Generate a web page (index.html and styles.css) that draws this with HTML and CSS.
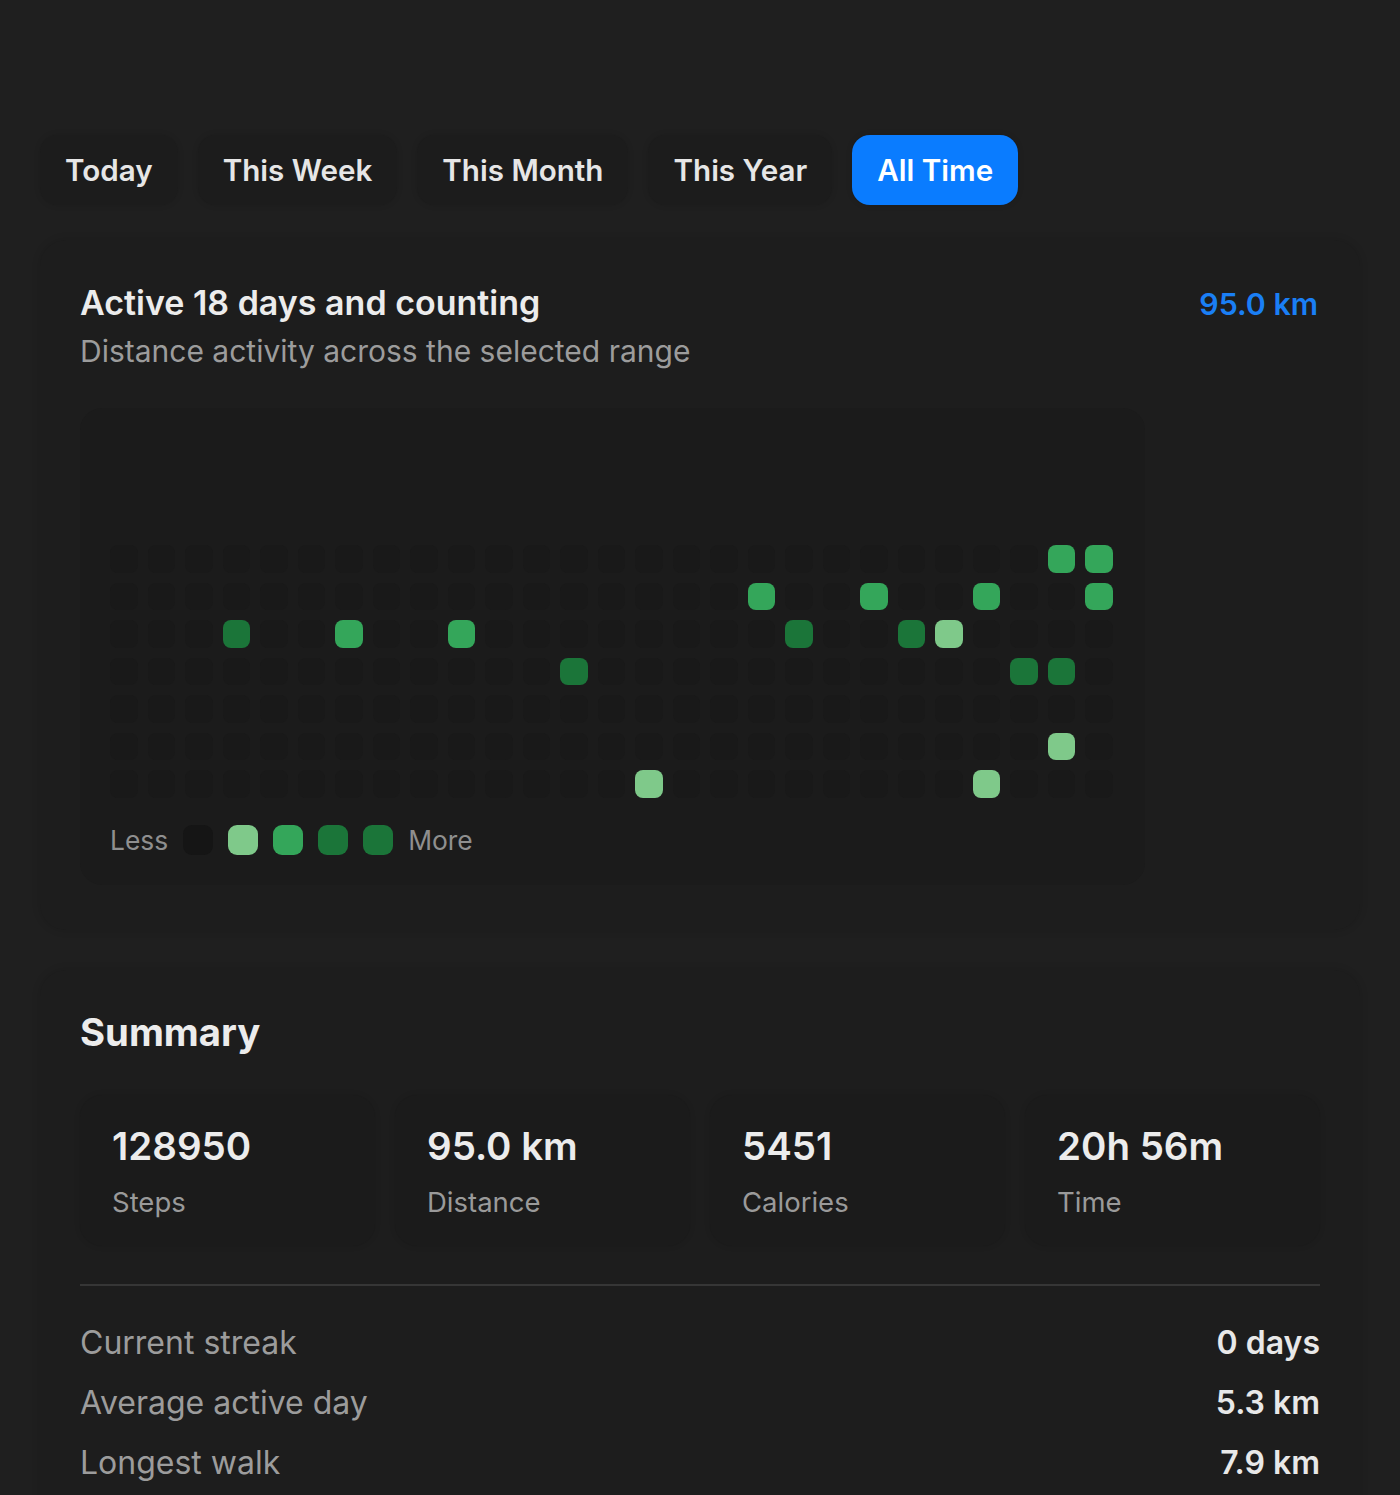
FILE: index.html
```html
<!DOCTYPE html>
<html lang="en">
<head>
<meta charset="utf-8">
<title>Activity</title>
<link rel="stylesheet" href="styles.css">
</head>
<body>
<div class="page">
  <nav class="tabs">
    <button class="tab">Today</button>
    <button class="tab">This Week</button>
    <button class="tab">This Month</button>
    <button class="tab">This Year</button>
    <button class="tab active">All Time</button>
  </nav>

  <section class="card activity">
    <div class="head">
      <div>
        <h2 class="title">Active 18 days and counting</h2>
        <p class="subtitle">Distance activity across the selected range</p>
      </div>
      <div class="total">95.0 km</div>
    </div>

    <div class="chart">
      <div class="grid">
        <div class="c"></div><div class="c"></div><div class="c"></div><div class="c"></div><div class="c"></div><div class="c"></div><div class="c"></div>
        <div class="c"></div><div class="c"></div><div class="c"></div><div class="c"></div><div class="c"></div><div class="c"></div><div class="c"></div>
        <div class="c"></div><div class="c"></div><div class="c"></div><div class="c"></div><div class="c"></div><div class="c"></div><div class="c"></div>
        <div class="c"></div><div class="c"></div><div class="c l3"></div><div class="c"></div><div class="c"></div><div class="c"></div><div class="c"></div>
        <div class="c"></div><div class="c"></div><div class="c"></div><div class="c"></div><div class="c"></div><div class="c"></div><div class="c"></div>
        <div class="c"></div><div class="c"></div><div class="c"></div><div class="c"></div><div class="c"></div><div class="c"></div><div class="c"></div>
        <div class="c"></div><div class="c"></div><div class="c l2"></div><div class="c"></div><div class="c"></div><div class="c"></div><div class="c"></div>
        <div class="c"></div><div class="c"></div><div class="c"></div><div class="c"></div><div class="c"></div><div class="c"></div><div class="c"></div>
        <div class="c"></div><div class="c"></div><div class="c"></div><div class="c"></div><div class="c"></div><div class="c"></div><div class="c"></div>
        <div class="c"></div><div class="c"></div><div class="c l2"></div><div class="c"></div><div class="c"></div><div class="c"></div><div class="c"></div>
        <div class="c"></div><div class="c"></div><div class="c"></div><div class="c"></div><div class="c"></div><div class="c"></div><div class="c"></div>
        <div class="c"></div><div class="c"></div><div class="c"></div><div class="c"></div><div class="c"></div><div class="c"></div><div class="c"></div>
        <div class="c"></div><div class="c"></div><div class="c"></div><div class="c l3"></div><div class="c"></div><div class="c"></div><div class="c"></div>
        <div class="c"></div><div class="c"></div><div class="c"></div><div class="c"></div><div class="c"></div><div class="c"></div><div class="c"></div>
        <div class="c"></div><div class="c"></div><div class="c"></div><div class="c"></div><div class="c"></div><div class="c"></div><div class="c l1"></div>
        <div class="c"></div><div class="c"></div><div class="c"></div><div class="c"></div><div class="c"></div><div class="c"></div><div class="c"></div>
        <div class="c"></div><div class="c"></div><div class="c"></div><div class="c"></div><div class="c"></div><div class="c"></div><div class="c"></div>
        <div class="c"></div><div class="c l2"></div><div class="c"></div><div class="c"></div><div class="c"></div><div class="c"></div><div class="c"></div>
        <div class="c"></div><div class="c"></div><div class="c l3"></div><div class="c"></div><div class="c"></div><div class="c"></div><div class="c"></div>
        <div class="c"></div><div class="c"></div><div class="c"></div><div class="c"></div><div class="c"></div><div class="c"></div><div class="c"></div>
        <div class="c"></div><div class="c l2"></div><div class="c"></div><div class="c"></div><div class="c"></div><div class="c"></div><div class="c"></div>
        <div class="c"></div><div class="c"></div><div class="c l3"></div><div class="c"></div><div class="c"></div><div class="c"></div><div class="c"></div>
        <div class="c"></div><div class="c"></div><div class="c l1"></div><div class="c"></div><div class="c"></div><div class="c"></div><div class="c"></div>
        <div class="c"></div><div class="c l2"></div><div class="c"></div><div class="c"></div><div class="c"></div><div class="c"></div><div class="c l1"></div>
        <div class="c"></div><div class="c"></div><div class="c"></div><div class="c l3"></div><div class="c"></div><div class="c"></div><div class="c"></div>
        <div class="c l2"></div><div class="c"></div><div class="c"></div><div class="c l3"></div><div class="c"></div><div class="c l1"></div><div class="c"></div>
        <div class="c l2"></div><div class="c l2"></div><div class="c"></div><div class="c"></div><div class="c"></div><div class="c"></div><div class="c"></div>
      </div>
      <div class="legend">
        <span class="legend-label">Less</span>
        <span class="sw l0"></span>
        <span class="sw l1"></span>
        <span class="sw l2"></span>
        <span class="sw l3"></span>
        <span class="sw l3"></span>
        <span class="legend-label">More</span>
      </div>
    </div>
  </section>

  <section class="card summary">
    <h2 class="summary-title">Summary</h2>
    <div class="stats">
      <div class="stat"><div class="stat-value">128950</div><div class="stat-label">Steps</div></div>
      <div class="stat"><div class="stat-value">95.0 km</div><div class="stat-label">Distance</div></div>
      <div class="stat"><div class="stat-value">5451</div><div class="stat-label">Calories</div></div>
      <div class="stat"><div class="stat-value">20h 56m</div><div class="stat-label">Time</div></div>
    </div>
    <div class="divider"></div>
    <div class="rows">
      <div class="row"><span class="row-label">Current streak</span><span class="row-value">0 days</span></div>
      <div class="row"><span class="row-label">Average active day</span><span class="row-value">5.3 km</span></div>
      <div class="row"><span class="row-label">Longest walk</span><span class="row-value">7.9 km</span></div>
    </div>
  </section>
</div>
</body>
</html>
```

FILE: styles.css
```css
* { box-sizing: border-box; }

html, body {
  margin: 0;
  padding: 0;
  background: #1f1f1f;
}

body {
  font-family: Inter, Roboto, "Liberation Sans", Arial, sans-serif;
  color: #ececec;
  height: 1495px;
  overflow: hidden;
}

.page {
  padding: 135px 40px 0;
}

.tabs {
  display: flex;
  gap: 20px;
  height: 70px;
}

.tab {
  font-family: inherit;
  font-size: 29.6px;
  font-weight: 600;
  color: #e6e6e6;
  background: #1c1c1c;
  border: none;
  border-radius: 18px;
  padding: 0 25px;
  height: 70px;
  box-shadow: 0 0 6px rgba(0, 0, 0, 0.12);
}

.tab.active {
  background: #0a7cff;
  color: #ffffff;
}

.card {
  background: #1d1d1d;
  border-radius: 26px;
  box-shadow: 0 0 8px rgba(0, 0, 0, 0.14);
}

.activity {
  margin-top: 35px;
  padding: 42px 40px 45px;
}

.head {
  display: flex;
  justify-content: space-between;
  align-items: flex-start;
}

.title {
  margin: 0;
  font-size: 34px;
  line-height: 42px;
  font-weight: 600;
  color: #ececec;
}

.subtitle {
  margin: 9px 0 0;
  font-size: 30px;
  line-height: 36px;
  color: #9c9c9c;
}

.total {
  font-size: 30.3px;
  line-height: 44px;
  font-weight: 600;
  color: #1a7ff5;
  padding-right: 2px;
}

.chart {
  margin-top: 39px;
  width: 1065px;
  background: #1b1b1b;
  border-radius: 22px;
  padding: 137px 30px 30px;
}

.grid {
  display: grid;
  grid-auto-flow: column;
  grid-template-rows: repeat(7, 27.5px);
  grid-auto-columns: 27.5px;
  gap: 10px;
}

.c {
  border-radius: 8px;
  background: #191919;
}

.c.l1, .sw.l1 { background: #7fc98a; }
.c.l2, .sw.l2 { background: #34a65a; }
.c.l3, .sw.l3 { background: #1b7539; }

.legend {
  display: flex;
  align-items: center;
  gap: 15px;
  margin-top: 27px;
  height: 30px;
}

.legend-label {
  font-size: 26.4px;
  color: #8f8f8f;
}

.sw {
  width: 30px;
  height: 30px;
  border-radius: 9px;
}

.sw.l0 { background: #151515; }

.summary {
  margin-top: 40px;
  padding: 40px 40px 40px;
  min-height: 560px;
}

.summary-title {
  margin: 0;
  font-size: 38.3px;
  line-height: 44px;
  font-weight: 700;
  color: #ececec;
}

.stats {
  margin-top: 41px;
  display: grid;
  grid-template-columns: repeat(4, 1fr);
  gap: 20px;
}

.stat {
  background: #1b1b1b;
  border-radius: 22px;
  padding: 29px 32px 28px;
  box-shadow: 0 0 6px rgba(0, 0, 0, 0.1);
}

.stat-value {
  font-size: 38.5px;
  line-height: 44px;
  font-weight: 600;
  color: #ececec;
}

.stat-label {
  margin-top: 18px;
  font-size: 27.5px;
  line-height: 32px;
  color: #9a9a9a;
}

.divider {
  margin-top: 38px;
  height: 2px;
  background: #363636;
}

.rows {
  margin-top: 27px;
}

.row {
  display: flex;
  justify-content: space-between;
  align-items: center;
  height: 60px;
}

.row-label {
  font-size: 32px;
  color: #9c9c9c;
}

.row-value {
  font-size: 32px;
  font-weight: 600;
  color: #e8e8e8;
}
```
